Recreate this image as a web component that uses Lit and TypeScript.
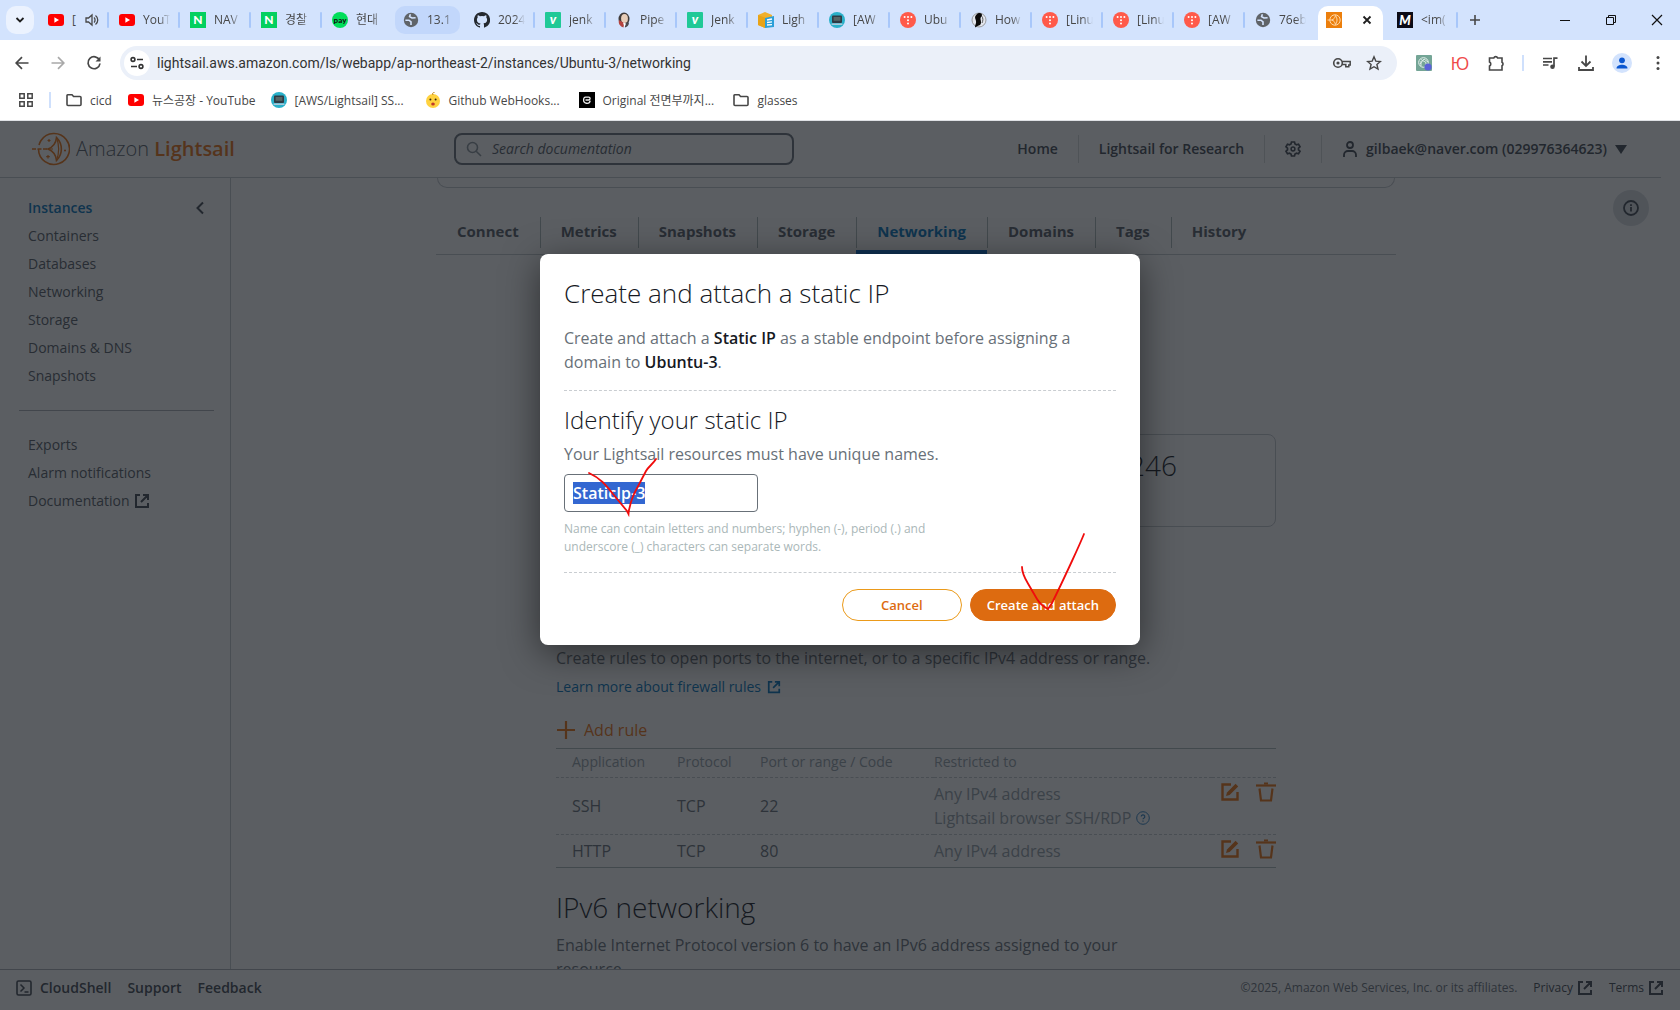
import { LitElement, html, css, svg, nothing, TemplateResult } from "lit";
import { customElement, property, query } from "lit/decorators.js";
import { classMap } from "lit/directives/class-map.js";

const base = css`
  *, *::before, *::after { box-sizing: border-box; }
  button, input { font: inherit; color: inherit; margin: 0; }
  button { background: none; border: 0; padding: 0; display: inline-flex; align-items: center; justify-content: center; }
  a { color: inherit; text-decoration: none; }
  svg { display: block; flex: none; }
`;

const icon = (size: number, body: unknown, box = size) =>
  html`<svg width=${size} height=${size} viewBox="0 0 ${box} ${box}" fill="none" aria-hidden="true">${body}</svg>`;

/* ---------- site icons ---------- */
const site: Record<string, () => TemplateResult> = {
  youtube: () => icon(16, svg`<rect y="2" width="16" height="12" rx="3" fill="#f00"/><path d="M6.4 5.3v5.4L11 8z" fill="#fff"/>`),
  naver: () => icon(16, svg`<rect width="16" height="16" fill="#03d05f"/><text x="8" y="12.4" text-anchor="middle" font-family="Lato, sans-serif" font-weight="900" font-size="12" fill="#fff">N</text>`),
  pay: () => icon(16, svg`<circle cx="8" cy="8" r="8" fill="#00de5a"/><text x="8" y="10.5" text-anchor="middle" font-family="Lato, sans-serif" font-weight="900" font-size="8" fill="#111">pay</text>`),
  globe: () => icon(16, svg`<circle cx="8" cy="8" r="7.2" fill="#5f6368"/><path d="M2.400 8.200h3.600l2 1.600v3.200M7.400 2.200L6.600 4.600l2.400 1.400 3.600-.2" stroke="#d3e3fd" stroke-width="1.600"/>`),
  github: () => icon(16, svg`<path fill="#24292f" d="M8 0C3.580 0 0 3.580 0 8c0 3.540 2.290 6.530 5.470 7.590.4.07.55-.17.55-.38v-1.330c-2.230.48-2.700-1.070-2.700-1.070-.36-.92-.89-1.170-.89-1.170-.73-.5.05-.49.05-.49.8.06 1.230.83 1.230.83.71 1.220 1.870.87 2.330.66.07-.52.28-.87.5-1.070-1.770-.2-3.640-.89-3.640-3.950 0-.87.31-1.590.82-2.150-.08-.2-.36-1.020.08-2.120 0 0 .67-.21 2.200.82a7.600 7.600 0 0 1 4 0c1.530-1.040 2.200-.82 2.200-.82.44 1.100.16 1.920.08 2.120.51.56.82 1.270.82 2.150 0 3.070-1.870 3.750-3.650 3.950.29.25.54.73.54 1.480v2.190c0 .21.15.46.55.38A8 8 0 0 0 8 0z"/>`),
  velog: () => icon(16, svg`<rect width="16" height="16" rx="1" fill="#20c997"/><text x="8" y="12" text-anchor="middle" font-family="Lato, sans-serif" font-weight="900" font-style="italic" font-size="13" fill="#fff">v</text>`),
  jenkins: () => icon(16, svg`<ellipse cx="8" cy="7" rx="5.500" ry="6.500" fill="#3f3a39"/><ellipse cx="8.500" cy="6.600" rx="3.400" ry="4.600" fill="#e8cdb8"/><path d="M3 8c-1 3.500 1 6.500 4.500 7.500L8 11z" fill="#b5433f"/><path d="M8 11l1 4.500c2.500-.5 4-2.500 4-5z" fill="#4a4a50"/><path d="M7 10.500l1.500 5 1.500-4z" fill="#fff"/>`),
  lightsailDocs: () => icon(16, svg`<path d="M0 3l7-3 7 3v10l-7 3-7-3z" fill="#f0b02c"/><path d="M0 3l7 2.500V16l-7-3z" fill="#e8a317"/><path d="M7 6l9-2v11l-9 1z" fill="#2b9fd8"/><path d="M9 8l5-1M9 10.500l5-.6M9 13l5-.4" stroke="#fff" stroke-width="1.400"/>`),
  aws: () => icon(16, svg`<circle cx="8" cy="8" r="8" fill="#29b0c9"/><rect x="3" y="3.600" width="10" height="7.400" rx="1" fill="#2e3a44"/><rect x="4.600" y="5" width="6.800" height="3.800" fill="#566"/><path d="M2.600 11.500h10.800v1.400H2.600z" fill="#bcd"/>`),
  tistory: () => icon(16, svg`<circle cx="8" cy="8" r="8" fill="#ff5a4a"/><g fill="#fff"><circle cx="4.600" cy="5" r="1"/><circle cx="8" cy="5" r="1"/><circle cx="11.400" cy="5" r="1"/><circle cx="8" cy="8.300" r="1"/><circle cx="8" cy="11.600" r="1"/></g>`),
  how: () => icon(16, svg`<circle cx="8" cy="8" r="7" fill="#e2e6ee" stroke="#888" stroke-width=".8"/><path d="M4 15.500c0-3 1.500-4 1-6.500S3 5 5.500 2.500 11 1 11 3s-1.500 1.500-1.500 3.500S11 11 9 13l-2.500 1z" fill="#0a0a0a"/><path d="M10.500 4c2 2 1.500 5 .5 7" stroke="#333" stroke-width=".8"/>`),
  lightsail: () => icon(16, svg`<rect width="16" height="16" fill="#ec7f0c"/><circle cx="9" cy="8" r="5.200" stroke="#ffd9ab"/><path d="M1.500 8H7M9.500 3.500c2 3 2 6 0 9M6 8c1.500-.5 3-2 3.500-4.500M6 8c1.500.5 3 2 3.500 4.500" stroke="#ffd9ab"/>`),
  medium: () => icon(16, svg`<rect width="16" height="16" fill="#0b0b16"/><text x="8" y="13" text-anchor="middle" font-family="Lato, sans-serif" font-weight="900" font-style="italic" font-size="13" fill="#fff">M</text>`),
  baby: () => icon(16, svg`<circle cx="8" cy="9" r="7" fill="#ffd23f"/><path d="M8 3c-1-1.500 0-3 1.500-2.500" stroke="#c58a1c"/><circle cx="5.400" cy="7.500" r="1" fill="#3a2c10"/><circle cx="10.600" cy="7.500" r="1" fill="#3a2c10"/><ellipse cx="8" cy="12" rx="1.800" ry="1.600" fill="#c0392b"/>`),
  original: () => icon(16, svg`<rect width="16" height="16" fill="#000"/><path d="M6.500 8h3.200a1.400 1.400 0 0 0 0-2.800H6.500A1.900 1.900 0 0 0 4.700 7.400 3.300 3.300 0 0 0 11.200 8.600" stroke="#eee" stroke-width="1.300"/>`),
  folder: () => icon(16, svg`<path d="M1 3.500A1 1 0 0 1 2 2.700h4l1.600 1.800H14a1 1 0 0 1 1 1v7a1 1 0 0 1-1 1H2a1 1 0 0 1-1-1z" stroke="#474747" stroke-width="1.600"/>`),
};

interface BrowserTab { icon: string; title: string; kind?: "audio" | "hover" | "active"; }

const browserTabs: BrowserTab[] = [
  { icon: "youtube", title: "[", kind: "audio" },
  { icon: "youtube", title: "YouT" },
  { icon: "naver", title: "NAV" },
  { icon: "naver", title: "경찰" },
  { icon: "pay", title: "현대" },
  { icon: "globe", title: "13.1", kind: "hover" },
  { icon: "github", title: "2024" },
  { icon: "velog", title: "jenk" },
  { icon: "jenkins", title: "Pipe" },
  { icon: "velog", title: "Jenk" },
  { icon: "lightsailDocs", title: "Ligh" },
  { icon: "aws", title: "[AW" },
  { icon: "tistory", title: "Ubu" },
  { icon: "how", title: "How" },
  { icon: "tistory", title: "[Linu" },
  { icon: "tistory", title: "[Linu" },
  { icon: "tistory", title: "[AW" },
  { icon: "globe", title: "76eb" },
  { icon: "lightsail", title: "", kind: "active" },
  { icon: "medium", title: "<im(" },
];

const bookmarks = [
  { icon: "folder", title: "cicd" },
  { icon: "youtube", title: "뉴스공장 - YouTube" },
  { icon: "aws", title: "[AWS/Lightsail] SS...", long: true },
  { icon: "baby", title: "Github WebHooks...", long: true },
  { icon: "original", title: "Original 전면부까지...", long: true },
  { icon: "folder", title: "glasses" },
];

@customElement("browser-chrome")
export class BrowserChrome extends LitElement {
  static styles = [base, css`
    :host { display: block; background: #fff; color: #474747; font-family: "Open Sans", "Noto Sans CJK KR", sans-serif; border-bottom: 1px solid #dfe1e5; }
    .strip { display: flex; height: 40px; background: #d3e3fd; padding-left: 6px; }
    .search-tabs { width: 28px; height: 28px; border-radius: 10px; background: #ebf2fe; align-self: center; margin-right: 4px; }
    .tab { position: relative; flex: 0 1 71px; min-width: 40px; height: 40px; padding-left: 10px; gap: 8px; justify-content: flex-start; font-size: 12px; }
    .tab::after { content: ""; position: absolute; right: 0; top: 12px; width: 2px; height: 16px; background: #a8c7fa; border-radius: 1px; }
    .tab.hover::after, .tab.active::after, .tab.quiet::after { display: none; }
    .title { width: 27px; overflow: hidden; white-space: nowrap; text-align: left; line-height: 20px; mask-image: linear-gradient(to right, #000 60%, transparent); }
    .audio .title { width: 5px; mask-image: none; }
    .hover::before { content: ""; position: absolute; z-index: 0; left: 2px; right: 4px; top: 6px; bottom: 6px; border-radius: 10px; background: #c2d7fb; }
    .tab svg, .title { position: relative; z-index: 1; }
    .active::before { content: ""; position: absolute; left: 2px; right: 4px; top: 6px; bottom: 0; border-radius: 10px 10px 0 0; background: #fff; }
    .active .x { margin-left: 9px; }
    .new { width: 34px; }
    .window { margin-left: auto; display: flex; }
    .window button { width: 46px; color: #111; }
    .toolbar { display: flex; align-items: center; height: 46px; padding: 0 4px; background: #fff; }
    .tool { width: 36px; height: 34px; }
    .dim { color: #a9a9a9; }
    .address { flex: 1; display: flex; align-items: center; height: 34px; border-radius: 17px; background: #ebf0f9; margin: 0 9px 0 8px; padding: 0 7px 0 4px; }
    .info { width: 26px; height: 26px; border-radius: 13px; background: #fff; }
    .url { flex: 1; min-width: 0; border: 0; outline: 0; background: none; font-family: Roboto, "Noto Sans CJK KR", sans-serif; font-size: 14px; padding: 0 0 0 7px; color: #333; }
    .inside { width: 32px; height: 30px; }
    .rule { width: 2px; height: 16px; margin: 0 8px; background: #cfe0fc; }
    .avatar { width: 20px; height: 20px; border-radius: 10px; background: #d3e3fd; color: #0b57d0; }
    .yu { font-size: 18px; color: #ef4a4a; }
    .bookmarks { display: flex; align-items: center; height: 28px; margin-bottom: 6px; padding-left: 18px; gap: 16px; font-size: 12px; }
    .bookmark { display: flex; align-items: center; gap: 7px; white-space: nowrap; }
    .bookmark svg { margin-right: 1px; }
    .long { gap: 6px; }
    .long span { min-width: 115px; }
    .bar { width: 2px; height: 16px; background: #cfe0fc; margin: 0 -1px; }
  `];

  private tab(t: BrowserTab, i: number) {
    const next = browserTabs[i + 1]?.kind;
    return html`<button role="tab" aria-selected=${t.kind === "active"} class=${classMap({ tab: true, quiet: next === "active" || next === "hover", [t.kind ?? "plain"]: true })}>
      ${site[t.icon]()}
      ${t.kind === "active"
        ? html`<span class="x">${icon(16, svg`<path d="M4.500 4.500l7 7M11.500 4.500l-7 7" stroke="#1f1f1f" stroke-width="1.800"/>`)}</span>`
        : html`<span class="title">${t.title}</span>`}
      ${t.kind === "audio" ? icon(14, svg`<path d="M1 5v4h2.500L7 12V2L3.500 5z" stroke="#474747" stroke-width="1.300"/><path d="M9 4.500c1.400 1.200 1.400 3.800 0 5M10.500 2.500c3 2.200 3 6.800 0 9" stroke="#474747" stroke-width="1.300"/>`) : nothing}
    </button>`;
  }

  render() {
    return html`
      <div class="strip" role="tablist">
        <button class="search-tabs" aria-label="Search tabs">${icon(12, svg`<path d="M2.500 4l3.500 3.500L9.500 4" stroke="#1f1f1f" stroke-width="1.800"/>`)}</button>
        ${browserTabs.map((t, i) => this.tab(t, i))}
        <button class="new" aria-label="New tab">${icon(14, svg`<path d="M7 2v10M2 7h10" stroke="#474747" stroke-width="1.600"/>`)}</button>
        <div class="window">
          <button aria-label="Minimize">${icon(12, svg`<path d="M1 6.500h10" stroke="currentColor"/>`)}</button>
          <button aria-label="Restore">${icon(12, svg`<path d="M1.500 3.500h7v7h-7zM3.500 3.500v-2h7v7h-2" stroke="currentColor"/>`)}</button>
          <button aria-label="Close">${icon(12, svg`<path d="M1 1l10 10M11 1L1 11" stroke="currentColor" stroke-width="1.200"/>`)}</button>
        </div>
      </div>
      <div class="toolbar">
        <button class="tool" aria-label="Back">${icon(16, svg`<path d="M14.500 8H2.500M8 2.200L2.200 8 8 13.800" stroke="currentColor" stroke-width="1.700"/>`)}</button>
        <button class="tool dim" aria-label="Forward">${icon(16, svg`<path d="M1.500 8h12M8 2.200L13.800 8 8 13.800" stroke="currentColor" stroke-width="1.700"/>`)}</button>
        <button class="tool" aria-label="Reload">${icon(16, svg`<path d="M13.500 5.200A6 6 0 1 0 14 8.500" stroke="currentColor" stroke-width="1.700"/><path d="M14.500 1.500V6.500H9.500z" fill="currentColor"/>`)}</button>
        <div class="address">
          <button class="info" aria-label="Site information">${icon(16, svg`<g stroke="#333" stroke-width="1.600"><circle cx="4" cy="4.500" r="1.900"/><path d="M8 4.500h6M2 11.500h6"/><circle cx="12" cy="11.500" r="1.900"/></g>`)}</button>
          <input class="url" aria-label="Address" value="lightsail.aws.amazon.com/ls/webapp/ap-northeast-2/instances/Ubuntu-3/networking" />
          <button class="inside" aria-label="Passwords">${icon(20, svg`<circle cx="6" cy="10" r="4.300" stroke="currentColor" stroke-width="1.600"/><circle cx="6" cy="10" r="1.600" fill="currentColor"/><path d="M10 8.500h8.200v3.400h-1.400v1.800h-3v-2.200H10" stroke="currentColor" stroke-width="1.500"/>`)}</button>
          <button class="inside" aria-label="Bookmark">${icon(16, svg`<path d="M8 1.800l1.800 4.300 4.600.4-3.500 3 1.100 4.600L8 11.700l-4 2.400 1.100-4.600-3.500-3 4.600-.4z" stroke="currentColor" stroke-width="1.400"/>`)}</button>
        </div>
        <button class="tool" aria-label="AI extension">${icon(16, svg`<rect width="16" height="16" rx="1" fill="#74a596"/><circle cx="7.500" cy="7.500" r="4.800" stroke="#e8f3ef"/><path d="M5 4.500l5 3v4M4 9l4-5 4 3M5 11V6" stroke="#e8f3ef" stroke-width=".9"/><circle cx="12" cy="12" r="3.600" fill="#5a62d8"/>`)}</button>
        <button class="tool yu" aria-label="Extension">Ю</button>
        <button class="tool" aria-label="Extensions">${icon(18, svg`<path d="M2.500 4h4.300a2 2 0 0 1 3.800 0H15v4.300a2 2 0 0 1 0 3.500V16H2.500v-4a2.200 2.200 0 0 0 0-4z" stroke="currentColor" stroke-width="1.600"/>`)}</button>
        <span class="rule"></span>
        <button class="tool" aria-label="Media">${icon(16, svg`<path d="M1 3.500h9M1 6.800h9M1 10h5.500M12 11.500V3.200h3.500" stroke="currentColor" stroke-width="1.700"/><circle cx="10.500" cy="11.800" r="2.300" fill="currentColor"/>`)}</button>
        <button class="tool" aria-label="Downloads">${icon(18, svg`<path d="M9 1.500v10M4.500 7.500L9 12l4.500-4.500M2 13v3h14v-3" stroke="currentColor" stroke-width="1.800"/>`)}</button>
        <button class="tool" aria-label="Profile"><span class="avatar">${icon(20, svg`<circle cx="10" cy="7.300" r="2.900" fill="currentColor"/><path d="M4.500 15.500c0-5 11-5 11 0z" fill="currentColor"/>`)}</span></button>
        <button class="tool" aria-label="Menu">${icon(16, svg`<g fill="currentColor"><circle cx="8" cy="2.500" r="1.500"/><circle cx="8" cy="8" r="1.500"/><circle cx="8" cy="13.500" r="1.500"/></g>`)}</button>
      </div>
      <nav class="bookmarks" aria-label="Bookmarks">
        <button aria-label="Apps">${icon(16, svg`<path d="M1.800 1.800h4.400v4.400H1.800zM9.800 1.800h4.400v4.400H9.800zM1.800 9.800h4.400v4.400H1.800zM9.800 9.800h4.400v4.400H9.800z" stroke="#474747" stroke-width="1.500"/>`)}</button>
        <span class="bar"></span>
        ${bookmarks.map((b) => html`<a href="#" class=${classMap({ bookmark: true, long: !!b.long })}>${site[b.icon]()}<span>${b.title}</span></a>`)}
      </nav>`;
  }
}

/* ---------- console icons ---------- */
const external = (size: number) => icon(size, svg`<path d="M6 2H2v12h12v-4M9 2h5v5M14 2L7 9" stroke="currentColor" stroke-width="2"/>`, 16);
const edit = () => icon(20, svg`<path d="M11 2.500H2.500v15h15V10" stroke="currentColor" stroke-width="2.400"/><path d="M6 14l1-3.600 8.600-8.600 2.600 2.600L9.600 13z" fill="currentColor"/>`);
const trash = () => icon(20, svg`<path d="M0 3.500h20" stroke="currentColor" stroke-width="2.200"/><path d="M8 1.500h4" stroke="currentColor" stroke-width="2"/><path d="M3.500 6.500L5 18.500h10l1.500-12" stroke="currentColor" stroke-width="2.200"/>`);

const primaryLinks = ["Instances", "Containers", "Databases", "Networking", "Storage", "Domains & DNS", "Snapshots"];
const secondaryLinks = ["Exports", "Alarm notifications", "Documentation"];
const instanceTabs = ["Connect", "Metrics", "Snapshots", "Storage", "Networking", "Domains", "Tags", "History"];
const rules = [
  { app: "SSH", protocol: "TCP", port: "22", from: ["Any IPv4 address", "Lightsail browser SSH/RDP"] },
  { app: "HTTP", protocol: "TCP", port: "80", from: ["Any IPv4 address"] },
];

@customElement("lightsail-console")
export class LightsailConsole extends LitElement {
  static styles = [base, css`
    :host { display: flex; flex-direction: column; min-height: 0; background: #fff; color: #545b64; font-size: 14px; line-height: 20px; }
    .header { display: flex; align-items: center; height: 57px; margin-right: 19px; border-bottom: 1px solid #c3c8cd; padding-left: 32px; }
    .brand { display: flex; align-items: center; gap: 6px; flex: 0 0 422px; font-size: 20px; font-weight: 300; color: #545b64; white-space: nowrap; }
    .brand b { font-weight: 600; color: #ec7211; }
    .search { display: flex; align-items: center; gap: 10px; width: 340px; height: 32px; border: 2px solid #687078; border-radius: 8px; padding: 0 10px; color: #8b949c; }
    .search input { flex: 1; min-width: 0; border: 0; outline: 0; background: none; padding: 0; font-style: italic; }
    .search input::placeholder { color: #545b64; opacity: 1; }
    .account { margin-left: auto; display: flex; align-items: center; color: #414750; }
    .account > * { height: 28px; display: flex; align-items: center; gap: 8px; padding: 0 20px; border-left: 1px solid #d5dbdb; font-weight: 600; white-space: nowrap; }
    .account > :first-child { border-left: 0; }
    .account .user { padding-right: 34px; }
    .body { flex: 1; min-height: 0; display: flex; padding-right: 19px; }
    .side { flex: 0 0 231px; border-right: 1px solid #c3c8cd; padding: 16px 16px 0 19px; }
    .side ul { list-style: none; margin: 0; padding: 0 0 0 9px; }
    .side li { height: 28px; display: flex; align-items: center; }
    .side li a { display: flex; align-items: center; gap: 4px; }
    .side li:first-child button { margin-left: auto; margin-right: 7px; color: #414750; }
    .side .on { color: #0073bb; font-weight: 600; }
    .side hr { border: 0; border-top: 1px solid #aab0b6; margin: 20px 0; }
    .ext { color: #414750; }
    .main { flex: 1; min-width: 0; overflow: hidden; display: flex; flex-direction: column; align-items: center; }
    .summary { flex: none; width: 958px; max-width: 100%; height: 10px; border: 1px solid #c3c8cd; border-top: 0; border-radius: 0 0 16px 16px; }
    .tabs { flex: none; display: flex; width: 960px; max-width: 100%; height: 43px; margin-top: 24px; border-bottom: 1px solid #c3c8cd; font-size: 15px; font-weight: 700; color: #545b64; }
    .tabs a { position: relative; padding: 9px 21px 0; }
    .tabs a + a::before { content: ""; position: absolute; left: 0; top: 5px; height: 31px; border-left: 1px solid #aab7b8; }
    .tabs .on { color: #0073bb; box-shadow: inset 0 -4px #0064c8; }
    .content { flex: none; width: 720px; max-width: 100%; font-size: 16px; line-height: 24px; color: #687078; }
    .ips { height: 93px; margin-top: 179px; border: 1px solid #c3c8cd; border-radius: 8px; padding: 12px 98px; font-size: 28px; line-height: 36px; font-weight: 300; color: #16191f; text-align: right; }
    p { margin: 0; }
    .firewall { margin-top: 119px; }
    .learn { display: flex; align-items: center; gap: 6px; font-size: 14px; line-height: 24px; margin: 5px 0 19px; color: #0073bb; }
    .add { display: flex; gap: 8px; height: 24px; margin-bottom: 6px; color: #ec7211; }
    table { width: 100%; border-collapse: collapse; border-top: 1px solid #aab7b8; border-bottom: 1px solid #aab7b8; table-layout: fixed; }
    th { text-align: left; font-weight: 400; font-size: 14px; line-height: 20px; height: 29px; padding: 0 0 2px; color: #95a0a8; }
    td { padding: 4px 0; }
    tbody tr { border-top: 1px dashed #c3c8cd; }
    th:first-child, td:first-child { padding-left: 16px; width: 121px; }
    .c2 { width: 83px; } .c3 { width: 174px; } .c5 { width: 64px; }
    .from { color: #95a0a8; }
    .from span { display: flex; align-items: center; gap: 5px; }
    .from button { color: #2f7fc0; }
    .actions { vertical-align: top; color: #ec7211; }
    .actions div { display: flex; justify-content: flex-end; gap: 16px; }
    h2 { font-size: 28px; font-weight: 300; line-height: 36px; margin: 21px 0 8px; color: #16191f; }
    .v6 { max-width: 580px; }
    .help { flex: 0 0 60px; display: flex; justify-content: center; padding-top: 12px; color: #414750; }
    .help button { width: 36px; height: 36px; border-radius: 18px; background: #d9dde2; }
    .footer { flex: none; display: flex; align-items: center; height: 41px; padding: 0 16px 4px; border-top: 1px solid #aab0b6; gap: 16px; color: #414750; }
    .footer a, .footer button { display: flex; align-items: center; gap: 8px; font-weight: 600; }
    .footer .legal { margin-left: auto; font-size: 12px; color: #687078; }
    .footer .thin { font-weight: 400; font-size: 12px; gap: 4px; }
  `];

  private get logo() {
    return html`<svg width="38" height="34" viewBox="0 0 38 34" fill="none" stroke="#ec7211" aria-hidden="true">
      <path d="M6.500 17a15.500 15.500 0 1 0 2.500-8.500A15.500 15.500 0 0 0 7 13" stroke-width="1.600"/>
      <path d="M0 17h16" stroke-width="1.600" stroke-dasharray="4 1.500"/>
      <path d="M16 17c5-2 8-6 8.500-11.500C31 12 31 22 24.500 28.500 24 23 21 19 16 17z" stroke-width="1.600"/>
      <path d="M24.500 5.500c3 8 3 15 0 23M16 17h5" stroke-width="1.200"/>
      <path d="M17 7v3M15.500 8.500h3M16 23v3.500M14.200 24.700h3.600M33 17.500v2M32 18.500h2" stroke-width="1.200"/>
    </svg>`;
  }

  render() {
    return html`
      <header class="header">
        <a class="brand" href="#">${this.logo}<span>Amazon <b>Lightsail</b></span></a>
        <label class="search">${icon(16, svg`<circle cx="6.500" cy="6.500" r="5" stroke="currentColor" stroke-width="1.600"/><path d="M10.200 10.200L15 15" stroke="currentColor" stroke-width="1.600"/>`)}<input aria-label="Search documentation" placeholder="Search documentation" /></label>
        <nav class="account">
          <a href="#">Home</a>
          <a href="#">Lightsail for Research</a>
          <button aria-label="Settings">${icon(16, svg`<path d="M6.500 1h3l.5 2 1.500.8 2-.6 1.500 2.600L13.500 7.200v1.600L15 10.200l-1.500 2.600-2-.6-1.500.8-.5 2h-3L6 13l-1.500-.8-2 .6L1 10.200l1.500-1.400V7.200L1 5.800l1.500-2.600 2 .6L6 3z" stroke="currentColor" stroke-width="1.700"/><circle cx="8" cy="8" r="1.900" stroke="currentColor" stroke-width="1.500"/>`)}</button>
          <button class="user">${icon(16, svg`<circle cx="8" cy="4" r="3" stroke="currentColor" stroke-width="1.800"/><path d="M2 16v-2a4 4 0 0 1 4-4h4a4 4 0 0 1 4 4v2" stroke="currentColor" stroke-width="1.800"/>`)}<span>gilbaek@naver.com (029976364623)</span>${icon(12, svg`<path d="M0 2h12L6 11z" fill="currentColor"/>`)}</button>
        </nav>
      </header>
      <div class="body">
        <nav class="side">
          <ul>${primaryLinks.map((l, i) => html`<li><a href="#" class=${i ? "" : "on"}>${l}</a>${i ? nothing : html`<button aria-label="Collapse">${icon(14, svg`<path d="M10 1.500L4.500 7l5.500 5.500" stroke="currentColor" stroke-width="2"/>`)}</button>`}</li>`)}</ul>
          <hr />
          <ul>${secondaryLinks.map((l) => html`<li><a href="#">${l}${l === "Documentation" ? html`<span class="ext">${external(16)}</span>` : nothing}</a></li>`)}</ul>
        </nav>
        <main class="main">
          <div class="summary"></div>
          <nav class="tabs">${instanceTabs.map((t) => html`<a href="#" class=${t === "Networking" ? "on" : ""}>${t}</a>`)}</nav>
          <div class="content">
            <div class="ips">246</div>
            <p class="firewall">Create rules to open ports to the internet, or to a specific IPv4 address or range.</p>
            <a class="learn" href="#">Learn more about firewall rules ${external(14)}</a>
            <button class="add">${icon(20, svg`<path d="M10 1v18M1 10h18" stroke="currentColor" stroke-width="2.200"/>`)}Add rule</button>
            <table>
              <thead><tr><th>Application</th><th class="c2">Protocol</th><th class="c3">Port or range / Code</th><th>Restricted to</th><th class="c5"></th></tr></thead>
              <tbody>
                ${rules.map((r) => html`<tr>
                  <td>${r.app}</td><td>${r.protocol}</td><td>${r.port}</td>
                  <td class="from">${r.from.map((f, i) => html`<span>${f}${i ? html`<button aria-label="About browser access">${icon(14, svg`<circle cx="7" cy="7" r="6.300" stroke="currentColor" stroke-width="1"/><path d="M5.200 5.600a1.800 1.800 0 1 1 2.600 1.600c-.6.300-.8.500-.8 1.100M7 9.500v1.300" stroke="currentColor" stroke-width="1.200"/>`)}</button>` : nothing}</span>`)}</td>
                  <td class="actions"><div><button aria-label="Edit rule">${edit()}</button><button aria-label="Delete rule">${trash()}</button></div></td>
                </tr>`)}
              </tbody>
            </table>
            <h2>IPv6 networking</h2>
            <p class="v6">Enable Internet Protocol version 6 to have an IPv6 address assigned to your resource.</p>
          </div>
        </main>
        <div class="help"><div><button aria-label="Open help panel">${icon(16, svg`<circle cx="8" cy="8" r="7" stroke="currentColor" stroke-width="1.800"/><path d="M8 7v4.500M8 4.300v1.600" stroke="currentColor" stroke-width="1.800"/>`)}</button></div></div>
      </div>
      <footer class="footer">
        <button>${icon(16, svg`<rect x="1" y="1" width="14" height="14" rx="1.500" stroke="currentColor" stroke-width="1.600"/><path d="M4.500 4.500L8 8l-3.500 3.500M8.500 12h4" stroke="currentColor" stroke-width="1.500"/>`)}CloudShell</button>
        <a href="#">Support</a>
        <a href="#">Feedback</a>
        <span class="legal">©2025, Amazon Web Services, Inc. or its affiliates.</span>
        <a class="thin" href="#">Privacy ${external(16)}</a>
        <a class="thin" href="#">Terms ${external(16)}</a>
      </footer>`;
  }
}

@customElement("static-ip-dialog")
export class StaticIpDialog extends LitElement {
  @property() instance = "Ubuntu-3";
  @query(".name") private nameInput!: HTMLInputElement;

  static styles = [base, css`
    :host { display: block; position: relative; width: 600px; padding: 24px; border-radius: 8px; background: #fff; color: #687078; font-size: 16px; line-height: 24px; box-shadow: 0 8px 36px rgba(0, 0, 0, .5); }
    h1, h2, p { margin: 0; }
    h1, h2 { font-weight: 300; color: #16191f; }
    h1 { font-size: 26px; line-height: 30px; margin-bottom: 18px; }
    h2 { font-size: 24px; line-height: 32px; margin-bottom: 6px; }
    strong { color: #16191f; font-weight: 600; }
    .part { border-bottom: 1px dashed #c9cdd1; padding-bottom: 16px; margin-bottom: 13px; }
    .name { display: block; width: 194px; height: 38px; margin: 8px 0; padding: 0 8px; border: 1px solid #687078; border-radius: 4px; outline: 0; background: #fff; color: #16191f; font-weight: 600; }
    .name::selection { background: #3367d1; color: #fff; }
    .hint { max-width: 380px; font-size: 12px; line-height: 18px; color: #aab7b8; }
    .buttons { display: flex; justify-content: flex-end; gap: 8px; font-size: 13px; font-weight: 600; padding-top: 3px; }
    .buttons button { min-width: 120px; height: 32px; padding: 0 16px; border: 1px solid #eb9a1a; border-radius: 16px; color: #dd6b10; }
    .buttons .primary { background: #dd6b10; border-color: #dd6b10; color: #fff; }
    .marks { position: absolute; inset: 0; pointer-events: none; }
  `];

  firstUpdated() {
    this.nameInput.focus();
    this.nameInput.select();
  }

  render() {
    return html`
      <h1 id="title">Create and attach a static IP</h1>
      <p class="part">Create and attach a <strong>Static IP</strong> as a stable endpoint before assigning a domain to <strong>${this.instance}</strong>.</p>
      <div class="part">
        <h2>Identify your static IP</h2>
        <label for="name">Your Lightsail resources must have unique names.</label>
        <input id="name" class="name" value="StaticIp-3" aria-describedby="hint" />
        <p class="hint" id="hint">Name can contain letters and numbers; hyphen (-), period (.) and underscore (_) characters can separate words.</p>
      </div>
      <div class="buttons"><button>Cancel</button><button class="primary">Create and attach</button></div>
      <svg class="marks" width="600" height="391" viewBox="0 0 600 391" fill="none" stroke="#f00c0c" stroke-width="1.800" stroke-linecap="round" aria-hidden="true">
        <path d="M49 219C60 224 66 231 73 240L87 257 88.500 260C89 253 91 247 94 240L106 217C109 212 113 210 116 205"/>
        <path d="M482 313C482 321 486 326 490 333L497 345C500 350 504 353 508 355L512 349C520 333 526 320 532 307C538 294 542 285 544 280"/>
      </svg>`;
  }
}

@customElement("app-root")
export class AppRoot extends LitElement {
  static styles = [base, css`
    :host { display: flex; flex-direction: column; height: 100vh; overflow: hidden; font-family: "Open Sans", "Noto Sans", sans-serif; }
    .viewport { position: relative; flex: 1; min-height: 0; display: flex; flex-direction: column; }
    lightsail-console { flex: 1; }
    .backdrop { position: absolute; inset: 0; display: flex; align-items: flex-start; justify-content: center; padding-top: 133px; background: rgba(22, 25, 31, .7); }
  `];

  render() {
    return html`
      <browser-chrome></browser-chrome>
      <div class="viewport">
        <lightsail-console></lightsail-console>
        <div class="backdrop"><static-ip-dialog role="dialog" aria-modal="true" aria-label="Create and attach a static IP"></static-ip-dialog></div>
      </div>`;
  }
}
